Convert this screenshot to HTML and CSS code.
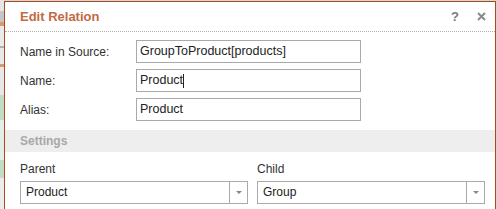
FILE: index.html
```html
<!DOCTYPE html>
<html>
<head>
<meta charset="utf-8">
<link rel="stylesheet" href="styles.css">
</head>
<body>
<div class="page">
  <div class="side"></div>
  <div class="dialog">
    <div class="header">
      <div class="title">Edit Relation</div>
      <div class="tools">
        <span class="help">?</span>
        <svg class="close" width="9" height="9" viewBox="0 0 9 9"><path d="M1 1L8 8M8 1L1 8" stroke="#8a8a8a" stroke-width="2" fill="none"/></svg>
      </div>
    </div>
    <div class="form">
      <div class="row">
        <div class="label">Name in Source:</div>
        <div class="input">GroupToProduct[products]</div>
      </div>
      <div class="row">
        <div class="label">Name:</div>
        <div class="input">Product<span class="caret"></span></div>
      </div>
      <div class="row">
        <div class="label">Alias:</div>
        <div class="input">Product</div>
      </div>
    </div>
    <div class="band">Settings</div>
    <div class="cols">
      <div class="col">
        <div class="clabel">Parent</div>
        <div class="select">
          <div class="sval">Product</div>
          <div class="sarrow"><span class="tri"></span></div>
        </div>
      </div>
      <div class="col">
        <div class="clabel">Child</div>
        <div class="select">
          <div class="sval">Group</div>
          <div class="sarrow"><span class="tri"></span></div>
        </div>
      </div>
    </div>
  </div>
</div>
</body>
</html>
```

FILE: styles.css
```css
html, body {
  margin: 0;
  padding: 0;
  background: #d6d6d6;
  font-family: "Liberation Sans", Arial, sans-serif;
}
.page {
  display: flex;
  width: 497px;
  height: 209px;
  overflow: hidden;
}
.side {
  width: 4px;
  flex: none;
  background: linear-gradient(to bottom,
    #e6e6e6 0, #e6e6e6 11px,
    #c6c6c6 11px, #c6c6c6 22px,
    #d89a70 22px, #d89a70 26px,
    #eaeaea 26px, #eaeaea 46px,
    #b0b0b0 46px, #b0b0b0 48px,
    #e9e9e9 48px, #e9e9e9 64px,
    #d89a70 64px, #d89a70 67px,
    #e8e8e8 67px, #e8e8e8 95px,
    #c3dcc3 95px, #c3dcc3 120px,
    #e6ece6 120px, #e6ece6 160px,
    #c3dcc3 160px, #c3dcc3 178px,
    #ececec 178px, #ececec 209px);
}
.dialog {
  margin-top: 1px;
  width: 490px;
  height: 220px;
  flex: none;
  background: #fff;
  border: 1px solid #a9491f;
  border-bottom: none;
}
.header {
  height: 30px;
  box-sizing: border-box;
  padding: 7px 0 0 15px;
  border-bottom: 1px dotted #b0b0b0;
  display: flex;
  justify-content: space-between;
}
.title {
  font-size: 13px;
  line-height: 15px;
  font-weight: bold;
  color: #c26a43;
}
.tools {
  display: flex;
  align-items: center;
  height: 15px;
  padding-right: 9px;
  gap: 18px;
}
.help {
  font-size: 13px;
  font-weight: bold;
  color: #7a7a7a;
  line-height: 15px;
}
.close {
  display: block;
}
.form {
  padding: 8px 0 0 15px;
  display: flex;
  flex-direction: column;
  gap: 6px;
}
.row {
  display: flex;
  align-items: center;
}
.label {
  width: 116px;
  font-size: 12px;
  color: #333;
}
.input {
  width: 225px;
  height: 23px;
  box-sizing: border-box;
  border: 1px solid #a9a9a9;
  padding-left: 3px;
  font-size: 12.5px;
  line-height: 21px;
  color: #222;
  display: flex;
  align-items: center;
}
.caret {
  display: inline-block;
  width: 1px;
  height: 14px;
  background: #222;
  margin-left: 0;
}
.band {
  margin-top: 9px;
  height: 22px;
  background: #eeeeee;
  padding-left: 15px;
  font-size: 12px;
  font-weight: bold;
  color: #a8a8a8;
  line-height: 22px;
}
.cols {
  padding: 10px 0 0 15px;
  display: grid;
  grid-template-columns: 228px 228px;
  column-gap: 9px;
}
.clabel {
  font-size: 12px;
  line-height: 15px;
  color: #333;
  margin-bottom: 4px;
}
.select {
  height: 23px;
  box-sizing: border-box;
  border: 1px solid #aaaaaa;
  display: flex;
}
.sval {
  flex: 1;
  padding-left: 5px;
  font-size: 12px;
  line-height: 21px;
  color: #222;
}
.sarrow {
  width: 17px;
  border-left: 1px solid #aaaaaa;
  display: flex;
  align-items: center;
  justify-content: center;
}
.tri {
  width: 0;
  height: 0;
  border-left: 3px solid transparent;
  border-right: 3px solid transparent;
  border-top: 3px solid #888;
}
```
